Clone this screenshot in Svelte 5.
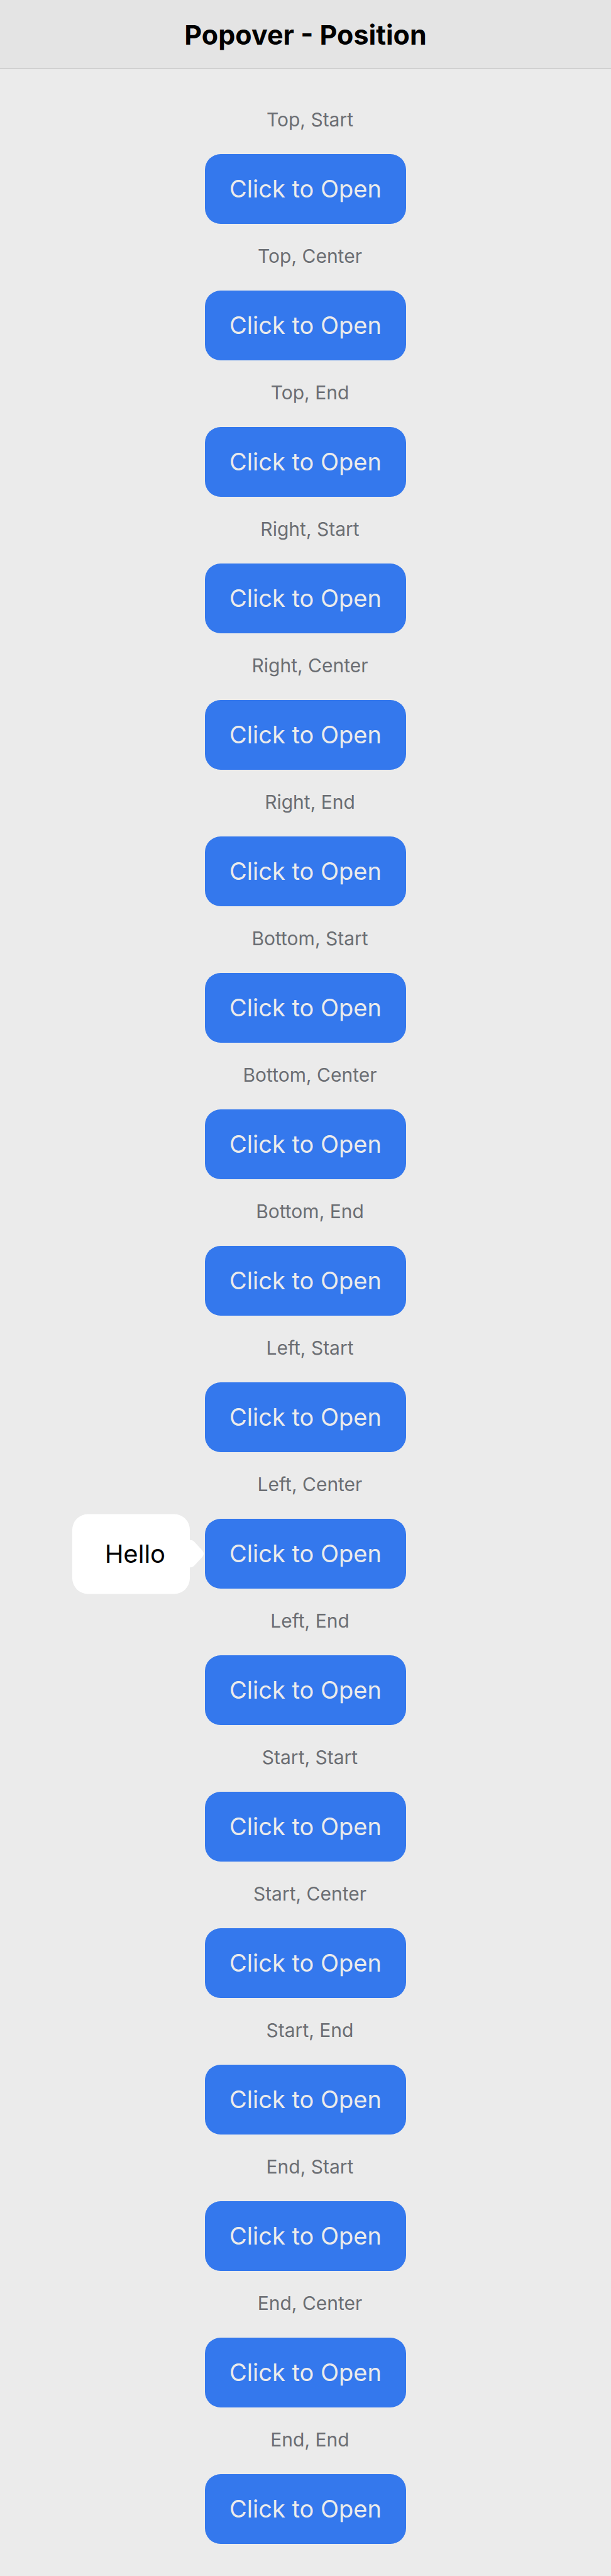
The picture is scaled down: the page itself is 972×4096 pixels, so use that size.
<script>
  const sides = ['Top', 'Right', 'Bottom', 'Left', 'Start', 'End'];
  const alignments = ['Start', 'Center', 'End'];
  const positions = sides.flatMap((side) => alignments.map((alignment) => `${side}, ${alignment}`));

  let open = $state('Left, Center');

  function toggle(position) {
    open = open === position ? null : position;
  }
</script>

<header>
  <h1>Popover - Position</h1>
</header>

<main>
  {#each positions as position, i}
    <section>
      <h2 id="position-{i}">{position}</h2>
      <div class="anchor">
        <button type="button" aria-describedby="position-{i}" aria-expanded={open === position} onclick={() => toggle(position)}>
          Click to Open
        </button>
        {#if open === position}
          <div class="popover" role="dialog" aria-labelledby="position-{i}">
            <p>Hello</p>
            <svg class="arrow" viewBox="0 0 22 44" aria-hidden="true">
              <path d="M0 0C3 0 5 1 7 3L20 17Q24 22 20 27L7 41C5 43 3 44 0 44Z" />
            </svg>
          </div>
        {/if}
      </div>
    </section>
  {/each}
</main>

<style>
  :global(body) {
    background: #ebebeb;
    font-family: Inter, 'Liberation Sans', sans-serif;
  }

  header {
    display: flex;
    align-items: center;
    justify-content: center;
    height: 109px;
    background: #e4e4e4;
    border-bottom: 1px solid #b3b3b3;
  }

  h1 {
    margin: 0;
    font-size: 43px;
    font-weight: 700;
    line-height: 52px;
    color: #000;
  }

  main {
    display: flex;
    flex-direction: column;
    align-items: center;
    gap: 31px;
    padding: 60px 0 51px;
  }

  section {
    display: flex;
    flex-direction: column;
    align-items: center;
    gap: 35px;
  }

  h2 {
    margin: 0;
    padding-left: 14px;
    font-size: 30px;
    font-weight: 400;
    line-height: 40px;
    color: #6b6e73;
  }

  .anchor {
    position: relative;
  }

  button {
    display: block;
    height: 111px;
    padding: 0 39px 2px;
    border: 0;
    border-radius: 25px;
    background: #3478ed;
    color: #ebebeb;
    font-family: inherit;
    font-size: 38px;
    font-weight: 400;
    cursor: pointer;
  }

  .popover {
    position: absolute;
    top: 50%;
    right: 100%;
    margin-right: 24px;
    padding: 38px 39px 39px 52px;
    border-radius: 25px;
    background: #fff;
    transform: translateY(-50%);
  }

  .popover p {
    margin: 0;
    font-size: 40px;
    line-height: 50px;
    color: #000;
  }

  .arrow {
    position: absolute;
    top: 50%;
    left: 100%;
    width: 22px;
    height: 44px;
    margin-top: -22px;
    fill: #fff;
  }
</style>
